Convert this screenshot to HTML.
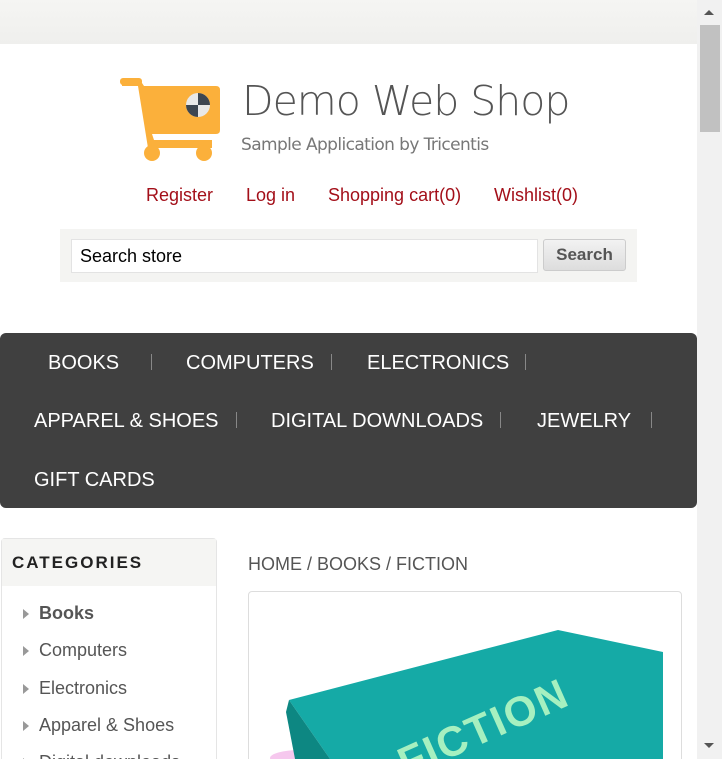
<!DOCTYPE html>
<html style="height:759px;overflow:hidden"><head><style>
*{margin:0;padding:0;box-sizing:border-box}
body{width:722px;height:759px;overflow:hidden;position:relative;background:#fff;font-family:"Liberation Sans",Arial,sans-serif}
.a{position:absolute;white-space:nowrap}
.nav{color:#fff;font-size:20px}
.sep{position:absolute;width:1px;height:16px;background:#888}
.hl{color:#a30f19;font-size:18px}
.cat{font-size:18px;color:#555}
.tri{position:absolute;width:0;height:0;border-left:6px solid #999;border-top:5px solid transparent;border-bottom:5px solid transparent}
</style></head><body>
<div class="a" style="left:0;top:0;width:697px;height:44px;background:linear-gradient(#f5f5f3,#efefed)"></div>
<div class="a" style="left:697px;top:0;width:25px;height:759px;background:#f1f1f1"></div>
<div class="a" style="left:700px;top:25px;width:20px;height:107px;background:#c1c1c1"></div>
<div class="a" style="left:704px;top:10px;width:0;height:0;border-left:5px solid transparent;border-right:5px solid transparent;border-bottom:5px solid #555"></div>
<div class="a" style="left:704px;top:743px;width:0;height:0;border-left:5px solid transparent;border-right:5px solid transparent;border-top:5px solid #555"></div>

<svg class="a" style="left:118px;top:76px" width="104" height="86" viewBox="0 0 104 86">
<path d="M4 4 H22 L26 10 H98 Q102 10 102 14 V54 Q102 58 98 58 H34 L36 64 H94 V72 H30 L20 10 H4 Z" fill="#fbb03b"/>
<rect x="2" y="2" width="22" height="7" rx="3" fill="#fbb03b"/>
<circle cx="34" cy="77" r="8" fill="#fbb03b"/><circle cx="86" cy="77" r="8" fill="#fbb03b"/>
<circle cx="80" cy="29" r="12" fill="#e8e8e8"/>
<path d="M80 17 A12 12 0 0 1 92 29 H80 Z M80 29 V41 A12 12 0 0 1 68 29 Z" fill="#3d4651"/>
</svg>
<div class="a" style="left:242px;top:77px;font-size:41px;color:#555;font-family:'DejaVu Sans',sans-serif;font-weight:300;letter-spacing:-1px">Demo Web Shop</div>
<div class="a" style="left:241px;top:135px;font-size:17px;color:#777;font-family:'DejaVu Sans',sans-serif;letter-spacing:-0.6px">Sample Application by Tricentis</div>

<div class="a hl" style="left:146px;top:185px">Register</div>
<div class="a hl" style="left:246px;top:185px">Log in</div>
<div class="a hl" style="left:328px;top:185px">Shopping cart(0)</div>
<div class="a hl" style="left:494px;top:185px">Wishlist(0)</div>

<div class="a" style="left:60px;top:229px;width:577px;height:53px;background:#f4f4f2"></div>
<div class="a" style="left:71px;top:239px;width:467px;height:34px;background:#fff;border:1px solid #e3e3e3"></div>
<div class="a" style="left:80px;top:246px;font-size:18px;color:#000">Search store</div>
<div class="a" style="left:543px;top:239px;width:83px;height:32px;border:1px solid #ccc;border-radius:3px;background:linear-gradient(#f2f2f2,#ddd);font-size:17px;font-weight:bold;color:#555;text-align:center;line-height:30px">Search</div>

<div class="a" style="left:0;top:333px;width:697px;height:175px;background:#404040;border-radius:6px"></div>
<div class="a nav" style="left:48px;top:352px">BOOKS</div><div class="sep" style="left:151px;top:354px"></div>
<div class="a nav" style="left:186px;top:352px">COMPUTERS</div><div class="sep" style="left:331px;top:354px"></div>
<div class="a nav" style="left:367px;top:352px">ELECTRONICS</div><div class="sep" style="left:525px;top:354px"></div>
<div class="a nav" style="left:34px;top:410px">APPAREL &amp; SHOES</div><div class="sep" style="left:236px;top:412px"></div>
<div class="a nav" style="left:271px;top:410px">DIGITAL DOWNLOADS</div><div class="sep" style="left:500px;top:412px"></div>
<div class="a nav" style="left:537px;top:410px">JEWELRY</div><div class="sep" style="left:651px;top:412px"></div>
<div class="a nav" style="left:34px;top:469px">GIFT CARDS</div>

<div class="a" style="left:1px;top:538px;width:216px;height:240px;border:1px solid #e5e5e5;border-radius:4px"></div>
<div class="a" style="left:2px;top:539px;width:214px;height:47px;background:#f5f5f3"></div>
<div class="a" style="left:12px;top:553px;font-size:17px;font-weight:bold;color:#222;letter-spacing:2px">CATEGORIES</div>
<div class="tri" style="left:23px;top:609px"></div><div class="a cat" style="left:39px;top:603px;font-weight:bold">Books</div>
<div class="tri" style="left:23px;top:646px"></div><div class="a cat" style="left:39px;top:640px">Computers</div>
<div class="tri" style="left:23px;top:684px"></div><div class="a cat" style="left:39px;top:678px">Electronics</div>
<div class="tri" style="left:23px;top:721px"></div><div class="a cat" style="left:39px;top:715px">Apparel &amp; Shoes</div>
<div class="tri" style="left:23px;top:758px"></div><div class="a cat" style="left:39px;top:752px">Digital downloads</div>

<div class="a" style="left:248px;top:554px;font-size:18px;color:#555">HOME / BOOKS / FICTION</div>
<div class="a" style="left:248px;top:591px;width:434px;height:200px;border:1px solid #ddd;border-radius:4px"></div>
<svg class="a" style="left:262px;top:605px" width="404" height="154" viewBox="262 605 404 154">
<ellipse cx="300" cy="758" rx="30" ry="8" fill="#f6c8ee"/>
<polygon points="289,700 558,630 663,652 663,759 330,759" fill="#15aaa6"/>
<polygon points="289,700 330,759 295,759 286,712" fill="#0d8782"/>
<text x="380" y="745" transform="rotate(-24 470 700)" font-family="Liberation Sans" font-weight="bold" font-size="42" fill="#a6f0c0" letter-spacing="2">FICTION</text>
</svg>
</body></html>
